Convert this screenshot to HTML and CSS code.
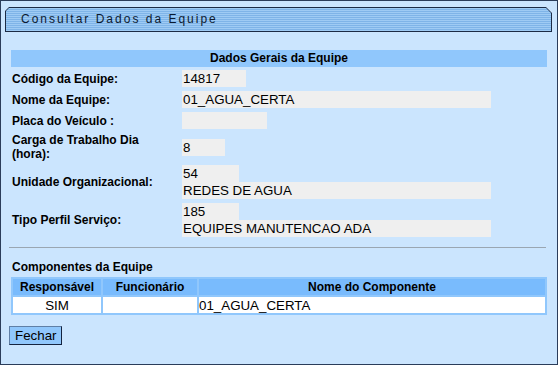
FILE: index.html
```html
<!DOCTYPE html>
<html lang="pt">
<head>
    <meta charset="UTF-8">
    <title>Consultar Dados da Equipe</title>
    <link rel="stylesheet" href="styles.css">
</head>
<body>
    <div class="frame">
        <!-- Barra de titulo -->
        <div class="title-bar">
            <div class="title-inner">Consultar Dados da Equipe</div>
        </div>

        <div class="content">
            <div class="section-head">Dados Gerais da Equipe</div>

            <div class="fields">
                <div class="label">Código da Equipe:</div>
                <div class="value"><span class="box w-64">14817</span></div>

                <div class="label">Nome da Equipe:</div>
                <div class="value"><span class="box w-long">01_AGUA_CERTA</span></div>

                <div class="label">Placa do Veículo :</div>
                <div class="value"><span class="box w-85"></span></div>

                <div class="label two-lines">Carga de Trabalho Dia<br>(hora):</div>
                <div class="value"><span class="box w-43">8</span></div>

                <div class="label">Unidade Organizacional:</div>
                <div class="value">
                    <span class="box w-57">54</span>
                    <span class="box w-long">REDES DE AGUA</span>
                </div>

                <div class="label">Tipo Perfil Serviço:</div>
                <div class="value">
                    <span class="box w-57">185</span>
                    <span class="box w-long">EQUIPES MANUTENCAO ADA</span>
                </div>
            </div>

            <hr class="divider">

            <div class="sub-title">Componentes da Equipe</div>
            <table class="comp-table">
                <thead>
                    <tr>
                        <th class="col-resp">Responsável</th>
                        <th class="col-func">Funcionário</th>
                        <th>Nome do Componente</th>
                    </tr>
                </thead>
                <tbody>
                    <tr>
                        <td class="center">SIM</td>
                        <td></td>
                        <td>01_AGUA_CERTA</td>
                    </tr>
                </tbody>
            </table>

            <button class="btn">Fechar</button>
        </div>
    </div>
</body>
</html>
```

FILE: styles.css
```css
/* Pagina */
body {
    margin: 0;
    background: #ffffff;
    font-family: "Liberation Sans", Arial, sans-serif;
    color: #000;
}

.frame {
    box-sizing: border-box;
    width: 558px;
    height: 365px;
    border: 1px solid #2b3d5a;
    background: #cbe5fe;
    padding: 6px 0 0 4px;
}

/* Barra de titulo com cantos chanfrados */
.title-bar {
    width: 547px;
    height: 25px;
    box-sizing: border-box;
    padding: 1px;
    background: #1c2b45;
    clip-path: polygon(4px 0, calc(100% - 6px) 0, 100% 6px, 100% 100%, 0 100%, 0 4px);
}

.title-inner {
    height: 100%;
    box-sizing: border-box;
    padding-left: 15px;
    font-size: 12px;
    line-height: 23px;
    letter-spacing: 2px;
    color: #0d1a30;
    background: repeating-linear-gradient(#9fcbf4 0 1px, #7fb4e8 1px 2px);
    clip-path: polygon(3px 0, calc(100% - 5px) 0, 100% 5px, 100% 100%, 0 100%, 0 3px);
}

.content {
    padding: 18px 0 0 6px;
    width: 536px;
}

.section-head {
    height: 17px;
    line-height: 17px;
    background: #90c7fc;
    text-align: center;
    font-size: 12px;
    font-weight: bold;
}

/* Campos */
.fields {
    display: grid;
    grid-template-columns: 171px 1fr;
    row-gap: 4px;
    margin-top: 3px;
    align-items: center;
}

.label {
    padding-left: 1px;
    font-size: 12px;
    font-weight: bold;
    line-height: 14px;
}

.value {
    display: flex;
    flex-direction: column;
    align-items: flex-start;
}

.box {
    display: block;
    box-sizing: border-box;
    height: 17px;
    line-height: 17px;
    padding: 0 1px;
    background: #efefef;
    font-size: 13.333px;
    white-space: nowrap;
}

.w-64 { width: 64px; }
.w-85 { width: 85px; }
.w-43 { width: 43px; }
.w-57 { width: 57px; }
.w-long { width: 309px; }

.divider {
    margin: 10px 0 0 -2px;
    width: 537px;
    border: none;
    border-top: 1px solid #9aa6b2;
    height: 0;
}

.sub-title {
    margin-top: 12px;
    padding-left: 1px;
    font-size: 12px;
    font-weight: bold;
    line-height: 14px;
}

/* Tabela de componentes */
.comp-table {
    margin-top: 3px;
    width: 536px;
    border-spacing: 2px;
    background: #90c7fc;
    font-size: 12px;
}

.comp-table th {
    background: #79bbfd;
    height: 16px;
    padding: 0;
    font-weight: bold;
    text-align: center;
}

.comp-table td {
    background: #ffffff;
    height: 16px;
    padding: 0;
    font-size: 13.333px;
    text-align: left;
}

.comp-table td.center {
    text-align: center;
}

.col-resp { width: 88px; }
.col-func { width: 94px; }

.btn {
    margin: 11px 0 0 -2px;
    height: 19px;
    padding: 0 5px;
    background: #90c7fc;
    border: 1px solid;
    border-color: #5f7fa6 #14233f #14233f #5f7fa6;
    font-family: "Liberation Sans", Arial, sans-serif;
    font-size: 13.333px;
    color: #000;
    line-height: 16px;
}
```
